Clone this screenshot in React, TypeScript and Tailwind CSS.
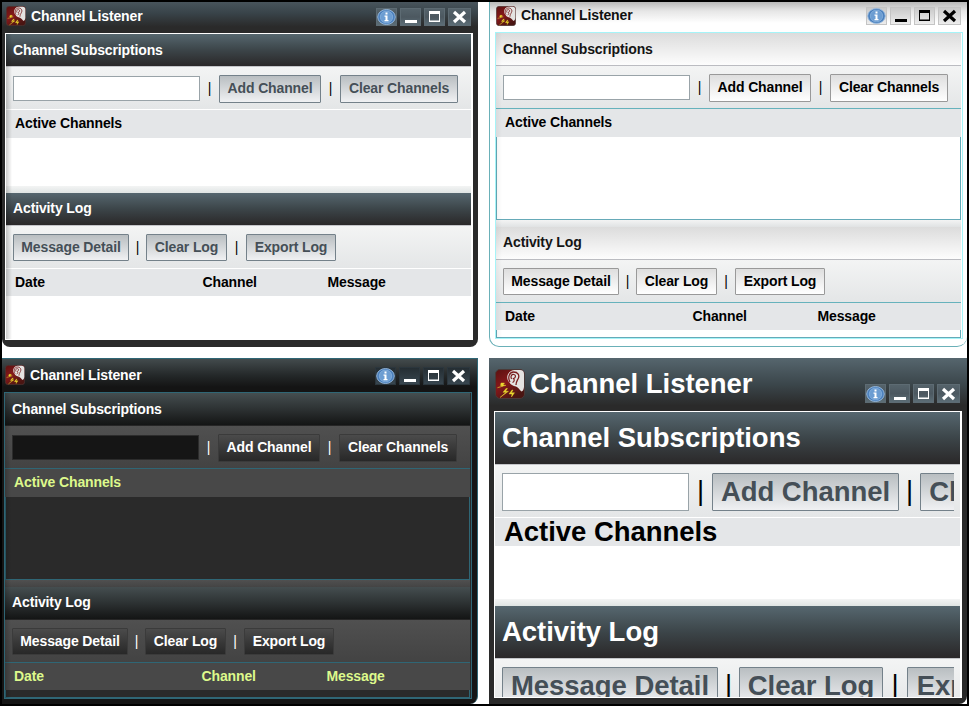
import React from "react";
import { clsx } from "clsx";

type Theme = {
  panel: string;
  titleBar: string;
  title: string;
  body: string;
  header: string;
  headerLine: string;
  toolbar: string;
  toolbarLine: string;
  input: string;
  pipe: string;
  lastPipe: string;
  button: string;
  columns: string;
  list: string;
  strip: string;
  edge: string;
  control: string;
  large?: boolean;
};

const silver = {
  header: "bg-linear-to-b from-[#56676f] via-[#3c4549] to-[#2a2829] text-white",
  headerLine: "bg-[#c4c5c9]",
  toolbar: "bg-linear-to-b from-[#f3f4f4] to-[#e4e6e7]",
  toolbarLine: "bg-white",
  input: "border-[#99a3a8] bg-white",
  pipe: "text-black",
  button: "border-[#74818a] bg-linear-to-b from-[#b9bec1] to-[#f0f1f3] text-[#454f57]",
  columns: "bg-[#e4e6e8] text-black",
  strip: "bg-linear-to-b from-[#f3f4f4] to-[#e0e5e4]",
  control: "border-[#5d6b73] bg-linear-to-b from-[#55636b] via-[#4c5860] to-[#5c6d76] text-white",
};

const themes: Record<string, Theme> = {
  silver: {
    ...silver,
    panel: "bg-[#2a2a2a] rounded-b-[8px]",
    titleBar: "h-[31px] pl-1 pr-[7px] pb-[2px] bg-linear-to-b from-[#48545c] from-0% via-[#39444a] via-35% to-[#2a2a2a] to-80%",
    title: "text-white",
    body: "ml-[3px] mb-[7px] border-white bg-white",
    list: "bg-white h-12",
    edge: "from-black/20",
    lastPipe: "w-[19px]",
  },
  light: {
    panel: "bg-white rounded-b-[10px] border-l border-b border-[#6ab0b8]",
    titleBar: "h-[30px] pl-1.5 pr-[6px] pb-[2px] bg-linear-to-b from-[#b8b8b8] from-0% via-[#e6e6e6] via-30% to-white to-70%",
    title: "text-[#111]",
    body: "ml-[5px] mb-[7px] border-[#a5f4f8] bg-white",
    header: "bg-linear-to-b from-[#dcdcdc] to-[#fdfdfd] text-[#151515]",
    headerLine: "bg-[#bbbcc1]",
    toolbar: "bg-linear-to-b from-[#f3f4f4] to-[#e4e6e7]",
    toolbarLine: "bg-[#66b2bc]",
    input: "border-[#99a3a8] bg-white",
    pipe: "text-black",
    button: "border-[#999] bg-linear-to-b from-[#dedede] to-white text-black",
    columns: "bg-[#e4e6e8] text-black",
    list: "bg-white border border-t-0 border-[#66aab8] h-[83px]",
    strip: "bg-linear-to-b from-[#f3f4f4] to-[#e0e2e3]",
    edge: "from-black/5",
    control: "border-[#c4c4c4] bg-linear-to-b from-[#c9c9c9] to-[#ededed] text-black",
    lastPipe: "w-[18px]",
  },
  dark: {
    panel: "bg-[#151515] rounded-br-[8px] border-t border-r border-[#2f6675]",
    titleBar: "h-[33px] pl-[3px] pr-[7px] bg-linear-to-b from-[#434b4d] from-0% via-[#242829] via-50% to-[#141414] to-85%",
    title: "text-white",
    body: "ml-[2px] mb-[5px] border-[#2f6675] bg-[#2a2a2a]",
    header: "bg-linear-to-b from-[#454e50] via-[#2d3233] to-[#141515] text-white",
    headerLine: "bg-[#262626]",
    toolbar: "bg-linear-to-b from-[#505050] to-[#434343]",
    toolbarLine: "bg-[#2f6675]",
    input: "border-[#2c2c2c] bg-[#151515]",
    pipe: "text-white",
    button: "border-[#3b3b3b] bg-linear-to-b from-[#4b4b4b] to-[#282828] text-white",
    columns: "bg-[#484848] text-[#ddf98c]",
    list: "bg-[#2a2a2a] border border-t-0 border-[#2f6675] h-[83px]",
    strip: "bg-linear-to-b from-[#505050] to-[#444]",
    edge: "from-black/20",
    control: "border-[#2b363d] bg-linear-to-b from-[#252e33] to-[#38464f] text-white",
    lastPipe: "w-[18px]",
  },
  large: {
    ...silver,
    panel: "bg-[#2a2a2a] rounded-br-[8px]",
    titleBar: "h-[53px] pl-1.5 pr-[7px] bg-linear-to-b from-[#56666e] from-0% via-[#3b464b] via-50% to-[#2a2a2a] to-90%",
    title: "text-white",
    body: "ml-[5px] mb-[6px] border-white bg-white",
    list: "bg-white h-[53px]",
    edge: "from-transparent",
    lastPipe: "w-[24px]",
    large: true,
  },
};

function EarIcon({ size }: { size: number }) {
  return (
    <svg width={size} height={size} viewBox="0 0 30 30" className="shrink-0">
      <defs>
        <linearGradient id="ear-bg" x1="0" y1="0" x2="0.6" y2="1">
          <stop offset="0" stopColor="#5a1211" />
          <stop offset="0.5" stopColor="#86181a" />
          <stop offset="1" stopColor="#4a1512" />
        </linearGradient>
      </defs>
      <rect x="0.5" y="0.5" width="29" height="29" rx="4.5" fill="url(#ear-bg)" stroke="#4a3a38" />
      <path d="M17 1.500C19 0.800 22 1 25 1Q29 1 29 5V18Q28.500 22 26.500 22.500C24.500 21 23.500 18.500 21 17.500C18 17 15.500 15.500 14.500 13.500C10.500 9.500 12 3.500 17 1.500Z" fill="#e4e3e1" />
      <path d="M15 13C12.300 8.500 14.500 3 18.500 3C23 3 25 6.500 23 10C22 12 21 13 21 16" fill="none" stroke="#7b1f20" strokeWidth="1.300" />
      <path d="M16.500 10C15 7 17 5 19 5.500C21.500 6.200 20.500 9 18.500 9.500C20 11 19 13 17.500 13.500" fill="none" stroke="#7b1f20" strokeWidth="1.200" />
      <path d="M6 14L9.500 14L8 16L11 16.300L2.500 18.700L7.500 17.200L5.500 16.500Z" fill="#ead82f" stroke="#ead82f" strokeWidth="0.400" />
      <path d="M11 19.500L8 23.300H11L5 28.500L13.500 22.300H10.500L12.500 19.500Z" fill="#ead82f" stroke="#ead82f" strokeWidth="0.400" />
      <path d="M17 21L14 25H17L16.500 28L19.500 23.700H16.500L18 21Z" fill="#ead82f" stroke="#ead82f" strokeWidth="0.400" />
    </svg>
  );
}

function Control({ theme, kind }: { theme: Theme; kind: "info" | "min" | "max" | "close" }) {
  return (
    <div
      className={clsx(
        "flex items-center justify-center border",
        kind === "close" ? "w-[23px]" : "w-[21px]",
        theme.large ? "h-[19px]" : "h-[18px]",
        theme.control,
      )}
    >
      <svg width="19" height="16" viewBox="0 0 19 16" className="shrink-0">
        {kind === "info" && (
          <>
            <ellipse cx="9.500" cy="8" rx="8.800" ry="7.500" fill="#4b80bd" stroke="#9bbce0" strokeWidth="0.900" />
            <ellipse cx="9.500" cy="8" rx="6.200" ry="5.900" fill="#6c9dd2" stroke="#87b0dc" strokeWidth="0.800" />
            <path d="M8.500 3.500h2v2h-2zM7.500 6.500h3v4.500h1v1.200h-4v-1.200h1v-3.300h-1z" fill="#fff" />
          </>
        )}
        {kind === "min" && <rect x="4" y="11" width="12" height="3" fill="currentColor" />}
        {kind === "max" && (
          <path d="M4 2h11v11H4zM5 5v6.500h9v-6.500z" fillRule="evenodd" fill="currentColor" />
        )}
        {kind === "close" && (
          <path d="M4 3L15 13M15 3L4 13" stroke="currentColor" strokeWidth="3.200" />
        )}
      </svg>
    </div>
  );
}

function SectionHeader({ theme, raised, children }: { theme: Theme; raised?: boolean; children: React.ReactNode }) {
  return (
    <>
      <div
        className={clsx(
          "flex shrink-0 items-center pl-[7px]",
          theme.large ? "h-[52px]" : "h-8",
          raised && !theme.large && "pb-[2px]",
          theme.header,
        )}
      >
        {children}
      </div>
      <div className={clsx("h-px shrink-0", theme.headerLine)} />
    </>
  );
}

function Pipe({ theme, width }: { theme: Theme; width: string }) {
  return <span className={clsx("shrink-0 pb-[2px] text-center font-normal", width, theme.pipe)}>|</span>;
}

function Button({ theme, className, children }: { theme: Theme; className: string; children: React.ReactNode }) {
  return (
    <button
      className={clsx("flex shrink-0 items-center justify-center rounded-[1px] border", className, theme.button)}
    >
      {children}
    </button>
  );
}

function ListenerWindow({ theme }: { theme: Theme }) {
  const big = theme.large;
  const toolbar = clsx("shrink-0 pl-[7px] pr-1.5 pt-2", big ? "h-[52px]" : "h-[42px]", theme.toolbar);
  return (
    <section
      className={clsx(
        "flex min-h-0 flex-col overflow-hidden font-bold whitespace-nowrap",
        big ? "text-[27.5px] leading-[38px] tracking-[-0.04px]" : "text-[14px] leading-[20px] tracking-[-0.13px]",
        theme.panel,
      )}
    >
      <div className={clsx("flex shrink-0 justify-between", theme.titleBar)}>
        <div className={clsx("flex items-center gap-[5px]", big ? "pb-px" : "pb-px")}>
          <EarIcon size={big ? 30 : 20} />
          <h1 className={clsx(theme.title, !big && "pb-px")}>Channel Listener</h1>
        </div>
        <div className={clsx("flex gap-[3px]", big ? "items-end pb-2" : "items-center")}>
          <Control theme={theme} kind="info" />
          <Control theme={theme} kind="min" />
          <Control theme={theme} kind="max" />
          <Control theme={theme} kind="close" />
        </div>
      </div>
      <div className={clsx("relative flex min-h-0 w-[468px] flex-1 flex-col overflow-hidden border pr-px", theme.body)}>
        <SectionHeader theme={theme}>Channel Subscriptions</SectionHeader>
        <div className={toolbar}>
          <div className={clsx("flex items-center overflow-hidden", big ? "h-[38px]" : "h-7")}>
            <input className={clsx("w-[187px] shrink-0 border", big ? "h-[38px]" : "mb-px h-[25px]", theme.input)} />
            <Pipe theme={theme} width={big ? "w-[23px]" : "w-[19px]"} />
            <Button theme={theme} className={big ? "h-[38px] w-[187px] pb-px" : "h-7 w-[102px] pb-[2px]"}>
              Add Channel
            </Button>
            <Pipe theme={theme} width={big ? "w-[21px]" : "w-[19px]"} />
            <Button theme={theme} className={big ? "h-[38px] w-[218px] pb-px" : "h-7 w-[118px] pb-[2px]"}>
              Clear Channels
            </Button>
          </div>
        </div>
        <div className={clsx("h-px shrink-0", theme.toolbarLine)} />
        <div className={clsx("flex h-7 shrink-0 items-center pl-[9px]", !big && "pb-[2px]", theme.columns)}>
          Active Channels
        </div>
        <div className={clsx("shrink-0", theme.list)} />
        <div className={clsx("h-[7px] shrink-0", theme.strip)} />
        <SectionHeader theme={theme} raised>
          Activity Log
        </SectionHeader>
        <div className={toolbar}>
          <div className={clsx("flex items-center overflow-hidden", big ? "h-[38px]" : "h-[27px]")}>
            <Button theme={theme} className={big ? "h-[38px] w-[216px] pb-px" : "h-[27px] w-[116px] pb-px"}>
              Message Detail
            </Button>
            <Pipe theme={theme} width={big ? "w-[21px]" : "w-[17px]"} />
            <Button theme={theme} className={big ? "h-[38px] w-[144px] pb-px" : "h-[27px] w-[81px] pb-px"}>
              Clear Log
            </Button>
            <Pipe theme={theme} width={theme.lastPipe} />
            <Button theme={theme} className={big ? "h-[38px] w-[164px] pb-px" : "h-[27px] w-[90px] pb-px"}>
              Export Log
            </Button>
          </div>
        </div>
        {!big && (
          <>
            <div className={clsx("h-px shrink-0", theme.toolbarLine)} />
            <div
              className={clsx(
                "grid h-[27px] shrink-0 grid-cols-[187.5px_125px_1fr] items-center pb-[2px] pl-[9px]",
                theme.columns,
              )}
            >
              <span>Date</span>
              <span>Channel</span>
              <span>Message</span>
            </div>
            <div className={clsx("min-h-0 flex-1", theme.list)} />
          </>
        )}
        <div className={clsx("pointer-events-none absolute inset-y-0 left-0 w-[6px] bg-linear-to-r to-transparent", theme.edge)} />
      </div>
    </section>
  );
}

export default function App() {
  return (
    <main className="grid h-[706px] w-[969px] grid-cols-[476px_478px] grid-rows-[345px_346px] gap-[11px] overflow-hidden border-2 border-black bg-white font-['Liberation_Sans',Arial,sans-serif]">
      <ListenerWindow theme={themes.silver} />
      <ListenerWindow theme={themes.light} />
      <ListenerWindow theme={themes.dark} />
      <ListenerWindow theme={themes.large} />
    </main>
  );
}
